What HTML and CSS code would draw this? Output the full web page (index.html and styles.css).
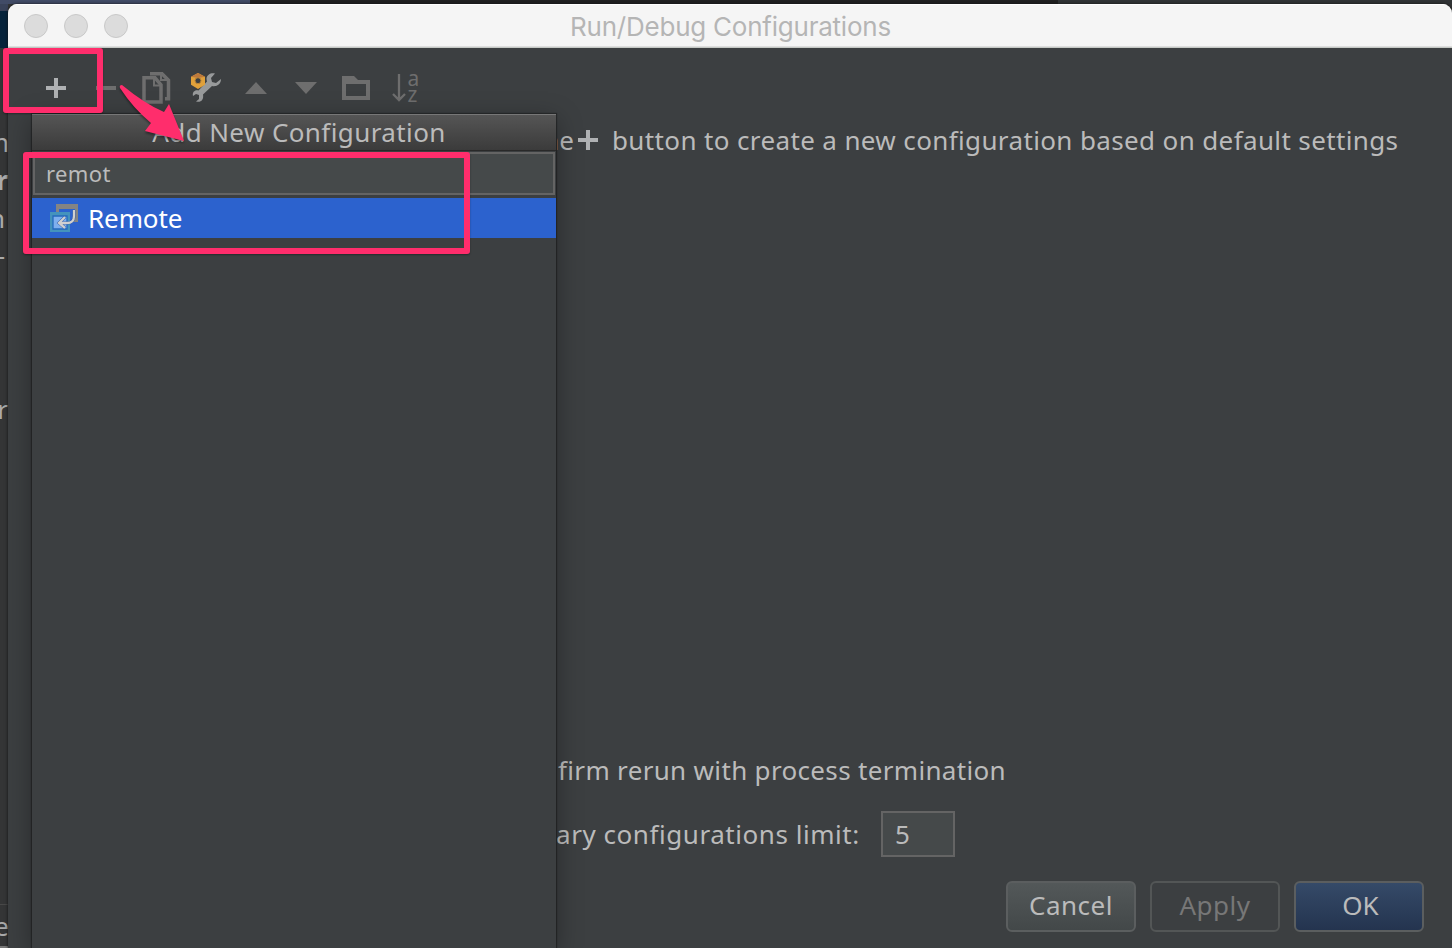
FILE: index.html
```html
<!DOCTYPE html>
<html lang="en">
<head>
<meta charset="utf-8">
<title>Run/Debug Configurations</title>
<link rel="stylesheet" href="styles.css">
</head>
<body>
<div class="desktop">
  <div class="backdrop-top"><i class="tab"></i><i class="dark"></i><i class="rest"></i></div>
  <div class="backdrop-side">
    <span class="frag f1">m</span><span class="frag f2">r</span><span class="frag f3">n</span><span class="frag f4">-</span><span class="frag f5">r</span><span class="frag f6">e</span>
  </div>
  <main class="window">
    <header class="titlebar">
      <div class="lights"><i></i><i></i><i></i></div>
      <h1><span>Run/Debug Configurations</span></h1>
    </header>
    <div class="toolbar">
      <svg viewBox="0 0 32 32"><path d="M14 6h4v8h8v4h-8v8h-4v-8H6v-4h8z" fill="#afb1b3"/></svg>
      <svg viewBox="0 0 32 32"><path d="M6 14h20v4H6z" fill="#6e6e6e"/></svg>
      <svg viewBox="0 0 32 32" fill="none" stroke="#6e6e6e"><path stroke-width="3.5" d="M4 5.8h11l6 7V30H4z"/><path stroke-width="2" d="M14 6v7.500h7"/><path stroke-width="3.500" d="M10 1.800h12l6.500 6.500v18.500H25"/><path stroke-width="2" d="M21 2v6h7"/></svg>
      <svg viewBox="0 0 32 32"><path d="M31 7 26 11l-4-1-1-4 4-4.500c-4-1-8 1-8.500 5 0 1 .2 2 .5 3l-8.500 9C5 17.500 2 20 3 24l3-2 3 1v4l-3 2.500c5 1.500 8-2 7-7l9-8.500c5 1 9-2 9-7z" fill="#989a9b"/><path d="M8 1l7 3.800v8L8 17l-7-4.200v-8z" fill="#e0a13b"/><path d="M8 1l7 3.800-7 1.200-7-1.200z" fill="#bd793c"/><circle cx="8" cy="8.700" r="3" fill="#3c3f41" stroke="#bc8538"/></svg>
      <svg viewBox="0 0 32 32"><path d="M16 10 27 22H5z" fill="#6e6e6e"/></svg>
      <svg viewBox="0 0 32 32"><path d="M5 10h22L16 22z" fill="#6e6e6e"/></svg>
      <svg viewBox="0 0 32 32"><path fill-rule="evenodd" d="M2 4h12l4 4h12v20H2zM6 12v12h20V12z" fill="#6e6e6e"/></svg>
      <svg viewBox="0 0 32 32"><path d="M9 2v26M3 22l6 6 6-6" fill="none" stroke="#6e6e6e" stroke-width="2.300"/><text x="17.500" y="14" class="sort">a</text><text x="17.500" y="30" class="sort">z</text></svg>
    </div>
    <section class="content">
      <p class="hint"><span class="the">the</span><svg viewBox="0 0 20 20"><path d="M8 0h4v8h8v4h-8v8H8v-8H0V8h8z" fill="#afb1b3"/></svg><span class="tip">button to create a new configuration based on default settings</span></p>
      <p class="confirm">firm rerun with process termination</p>
      <div class="limit"><span>ary configurations limit:</span><span class="number">5</span></div>
    </section>
    <footer class="actions">
      <button class="btn cancel">Cancel</button><button class="btn apply" disabled>Apply</button><button class="btn ok">OK</button>
    </footer>
  </main>
  <aside class="popup">
    <div class="popup-title"><span>Add New Configuration</span></div>
    <div class="search"><span>remot</span></div>
    <div class="item"><svg viewBox="0 0 28 28"><path d="M6 0h22v18h-5v-3h2V5H9v3H6z" fill="#848484"/><path d="M0 8h20v20H0z" fill="#4493bd"/><path d="M3 12h14v13H3z" fill="#7eafee" stroke="#2469bd" stroke-width="1.300"/><path d="M24 6v6q0 7-7 7H9m6-6-6 6 6 5" stroke="#234f9f" stroke-width="3" fill="none"/><path d="M24 6v6q0 7-7 7H9m6-6-6 6 6 5" stroke="#d0d0d0" stroke-width="2.300" fill="none"/></svg><span>Remote</span></div>
  </aside>
  <div class="mark mark-add"></div>
  <div class="mark mark-list"></div>
  <svg class="arrow" viewBox="0 0 76 66"><path d="M6 5Q3 5 4 8 17 28 35 43L29 51 68 61 53 24 48 32Q29 24 6 5z" fill="#ff2d6c"/></svg>
</div>
</body>
</html>
```
FILE: styles.css
```css
* { box-sizing: border-box; }
body { margin: 0; font-family: "Noto Sans", "Open Sans", sans-serif; font-size: 26px; color: #bbb; }
p, h1 { margin: 0; font-weight: 400; }
.desktop { position: relative; width: 1452px; height: 948px; overflow: hidden; background: #333435; }
.backdrop-top { display: flex; height: 4px; }
.backdrop-top .tab { width: 250px; background: #414b66; }
.backdrop-top .dark { width: 808px; background: #202021; }
.backdrop-top .rest { flex: 1; background: #303335; }
.backdrop-side { position: absolute; left: 0; top: 4px; width: 8px; height: 944px; overflow: hidden; background: linear-gradient(#394259 0 7px, #06233b 7px 44px, #343536 44px 900px, #484848 900px 901px, #343536 901px 942px, #777 942px); line-height: 36px; }
.frag { position: absolute; right: 0; color: #aaa; }
.f1 { top: 120px; right: -1px; } .f2 { top: 158px; font-weight: 700; } .f3 { top: 196px; right: 3px; } .f4 { top: 233px; right: 3px; } .f5 { top: 387px; } .f6 { top: 904px; right: -1px; }
.window { position: absolute; left: 8px; top: 4px; width: 1444px; height: 944px; display: flex; flex-direction: column; background: #3c3f41; border-radius: 9px 9px 0 0; overflow: hidden; box-shadow: 0 0 3px #111; }
.titlebar { display: flex; align-items: center; height: 44px; flex: none; background: #f5f5f5; border-bottom: 1px solid #c5c9c5; box-shadow: inset 0 1px #fff, inset 0 -1px #dedede; }
.lights { display: flex; gap: 16px; padding-left: 16px; width: 112px; }
.lights i { width: 24px; height: 24px; border-radius: 50%; background: #dcdcdc; border: 1px solid #c9c9c9; flex: none; }
h1 { flex: 1; padding: 2px 111px 0 0; text-align: center; font-family: Inter, sans-serif; font-size: 26px; line-height: 32px; color: #b5b5b5; }
h1 span { letter-spacing: -.23px; }
.toolbar { display: flex; gap: 18px; padding: 24px 0 0 32px; height: 72px; flex: none; }
.toolbar svg { width: 32px; height: 32px; flex: none; }
.sort { font: 21px "Noto Sans", sans-serif; fill: #6e6e6e; }
.content { flex: 1; display: flex; flex-direction: column; line-height: 36px; padding-top: 2px; }
.hint { display: flex; align-items: center; padding-left: 526px; white-space: nowrap; height: 36px; }
.hint svg { width: 20px; height: 20px; margin: 0 14px 0 4px; flex: none; }
.the { width: 40px; display: flex; justify-content: flex-end; }
.tip { letter-spacing: .37px; }
.confirm { margin-top: 594px; padding-left: 550px; letter-spacing: .33px; }
.limit { display: flex; align-items: center; margin-top: 23px; padding-left: 548px; height: 46px; letter-spacing: .55px; }
.limit span:first-child { width: 325px; white-space: nowrap; }
.number { width: 74px; height: 46px; padding-left: 12px; line-height: 42px; background: #45494a; border: 2px solid #646464; }
.actions { display: flex; justify-content: flex-end; gap: 14px; padding: 0 28px 16px 0; flex: none; }
.btn { width: 130px; height: 51px; padding: 0 0 2px; font: inherit; line-height: 45px; letter-spacing: .5px; color: #bbb; border: 2px solid #5b5e5f; border-radius: 6px; background: none; }
.cancel { background: linear-gradient(#535859, #434849); }
.apply { color: #777; border-color: #535656; }
.ok { background: linear-gradient(#354a68, #24344f); padding-left: 3px; letter-spacing: 0; }
.popup { position: absolute; left: 32px; top: 114px; width: 524px; height: 834px; background: #3c3f41; box-shadow: 0 6px 24px rgba(0,0,0,.35), 0 0 1px 1px #292b2c; }
.popup-title { height: 37px; padding-left: 10px; border-top: 1px solid #777; border-bottom: 1px solid #292929; background: linear-gradient(#555, #3b3b3b); text-align: center; line-height: 35px; letter-spacing: .4px; }
.search { height: 43px; margin: 1px 1px 3px; padding-left: 11px; border: 2px solid #646464; background: #45494a; font-size: 22px; line-height: 39px; letter-spacing: .4px; }
.item { display: flex; align-items: center; height: 40px; gap: 10px; padding-left: 18px; margin-top: 2px; background: #2c62ce; color: #fff; letter-spacing: -.1px; }
.item svg { width: 28px; height: 28px; }
.mark { position: absolute; border: 6px solid #ff2d6c; border-radius: 3px; box-shadow: 0 1px 2px rgba(0,0,0,.35); }
.mark-add { left: 3px; top: 48px; width: 100px; height: 65px; }
.mark-list { left: 23px; top: 152px; width: 447px; height: 102px; }
.arrow { position: absolute; left: 116px; top: 80px; width: 76px; height: 66px; filter: drop-shadow(0 2px 1px rgba(0,0,0,.4)); }
```
